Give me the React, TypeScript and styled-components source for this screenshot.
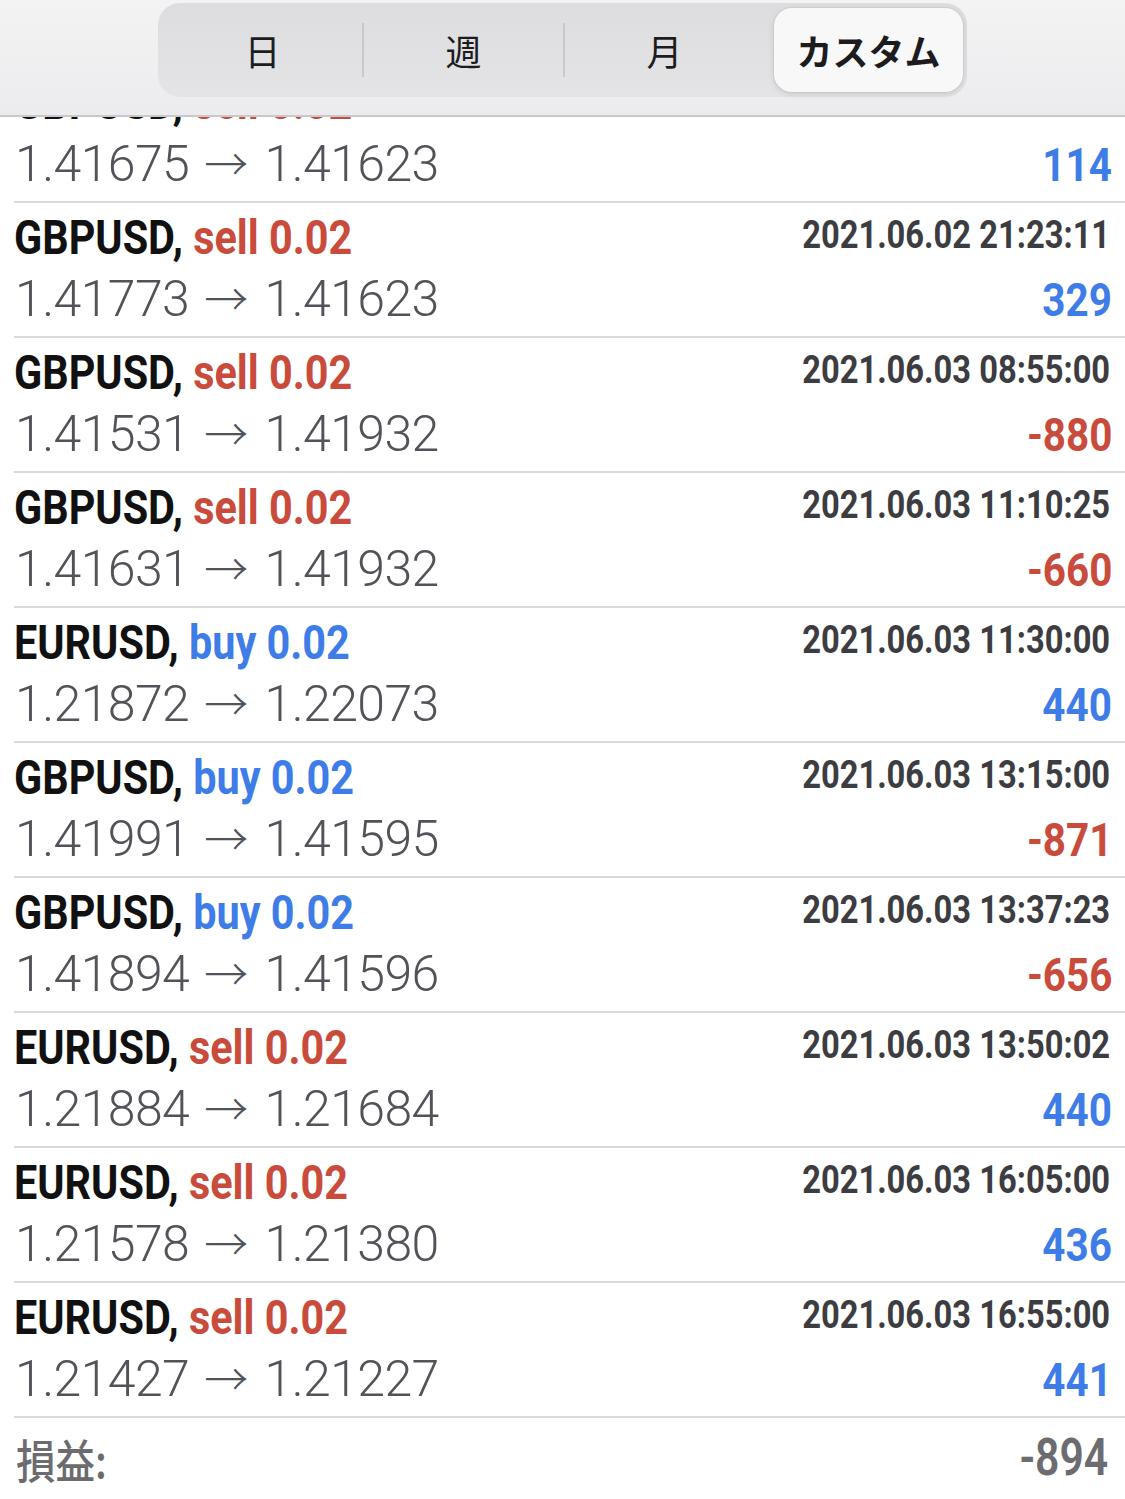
import React from "react";
import styled, { createGlobalStyle } from "styled-components";

type Trade = {
  symbol: string;
  side: "buy" | "sell";
  volume: string;
  time?: string;
  open: string;
  close: string;
  profit: number;
};

const trades: Trade[] = [
  { symbol: "GBPUSD", side: "sell", volume: "0.02", open: "1.41675", close: "1.41623", profit: 114 },
  { symbol: "GBPUSD", side: "sell", volume: "0.02", time: "2021.06.02 21:23:11", open: "1.41773", close: "1.41623", profit: 329 },
  { symbol: "GBPUSD", side: "sell", volume: "0.02", time: "2021.06.03 08:55:00", open: "1.41531", close: "1.41932", profit: -880 },
  { symbol: "GBPUSD", side: "sell", volume: "0.02", time: "2021.06.03 11:10:25", open: "1.41631", close: "1.41932", profit: -660 },
  { symbol: "EURUSD", side: "buy", volume: "0.02", time: "2021.06.03 11:30:00", open: "1.21872", close: "1.22073", profit: 440 },
  { symbol: "GBPUSD", side: "buy", volume: "0.02", time: "2021.06.03 13:15:00", open: "1.41991", close: "1.41595", profit: -871 },
  { symbol: "GBPUSD", side: "buy", volume: "0.02", time: "2021.06.03 13:37:23", open: "1.41894", close: "1.41596", profit: -656 },
  { symbol: "EURUSD", side: "sell", volume: "0.02", time: "2021.06.03 13:50:02", open: "1.21884", close: "1.21684", profit: 440 },
  { symbol: "EURUSD", side: "sell", volume: "0.02", time: "2021.06.03 16:05:00", open: "1.21578", close: "1.21380", profit: 436 },
  { symbol: "EURUSD", side: "sell", volume: "0.02", time: "2021.06.03 16:55:00", open: "1.21427", close: "1.21227", profit: 441 },
];

const tabs = ["日", "週", "月", "カスタム"];

const RED = "#c84b3c";
const BLUE = "#3e7ce8";

const GlobalStyle = createGlobalStyle`
  html, body {
    margin: 0;
    padding: 0;
    background: #ffffff;
  }
  body {
    font-family: Roboto, "Noto Sans CJK JP", sans-serif;
    -webkit-font-smoothing: antialiased;
  }
`;

const Page = styled.div`
  position: relative;
  width: 1125px;
  height: 1499px;
  overflow: hidden;
  background: #ffffff;
`;

const Header = styled.header`
  position: absolute;
  top: 0;
  left: 0;
  right: 0;
  height: 117px;
  display: flex;
  justify-content: center;
  padding-top: 3px;
  box-sizing: border-box;
  background: linear-gradient(#f3f3f4, #ececee);
  border-bottom: 2px solid #c9c9cc;
  z-index: 2;
`;

const Segmented = styled.div`
  display: flex;
  align-items: center;
  width: 809px;
  height: 94px;
  padding: 0 4px;
  box-sizing: border-box;
  border-radius: 22px;
  background: linear-gradient(#dddde0, #e4e4e7);
`;

const Segment = styled.div<{ $active?: boolean; $divider?: boolean }>`
  position: relative;
  flex: ${({ $active }) => ($active ? "0 0 189px" : "1 1 0")};
  margin-left: ${({ $active }) => ($active ? "9px" : "0")};
  height: 84px;
  display: flex;
  align-items: center;
  justify-content: center;
  border-radius: 18px;
  font-family: "Noto Sans CJK JP", sans-serif;
  font-size: 36px;
  font-weight: ${({ $active }) => ($active ? 700 : 400)};
  color: #1c1c1e;
  background: ${({ $active }) => ($active ? "#f8f8f8" : "transparent")};
  box-shadow: ${({ $active }) =>
    $active ? "0 2px 6px rgba(0,0,0,0.12), 0 0 0 1px rgba(0,0,0,0.04)" : "none"};

  &::after {
    content: "";
    display: ${({ $divider }) => ($divider ? "block" : "none")};
    position: absolute;
    right: -1px;
    top: 15px;
    bottom: 15px;
    width: 2px;
    background: #c9c9cd;
  }
`;

const List = styled.div`
  padding-top: 68px;
`;

const Row = styled.div`
  margin-left: 14px;
  padding: 5px 15px 6px 0;
  border-bottom: 2px solid #d9d9dc;
`;

const Line = styled.div<{ $tall?: number }>`
  display: flex;
  justify-content: space-between;
  align-items: baseline;
  height: ${({ $tall }) => $tall ?? 60}px;
`;

const TopLine = styled(Line)`
  align-items: flex-start;
`;

const Condensed = styled.span<{ $origin?: "left" | "right"; $scale?: number }>`
  display: inline-block;
  white-space: nowrap;
  transform: scaleX(${({ $scale }) => $scale ?? 0.86});
  transform-origin: ${({ $origin }) => $origin ?? "left"} center;
`;

const Title = styled.div`
  font-size: 49px;
  line-height: 60px;
  font-weight: 700;
  color: #111111;
`;

const Side = styled.span<{ $side: "buy" | "sell" }>`
  color: ${({ $side }) => ($side === "buy" ? BLUE : RED)};
`;

const Time = styled.div`
  font-size: 38px;
  line-height: 54px;
  font-weight: 700;
  color: #3c3c41;
`;

const Prices = styled.div`
  font-size: 50px;
  line-height: 62px;
  font-weight: 300;
  color: #525358;
  letter-spacing: -0.6px;
  margin-left: 1px;
`;

const Arrow = styled.span`
  display: inline-block;
  margin: 0 17px 0 15px;
  font-size: 44px;
  font-weight: 300;
`;

const Profit = styled.div<{ $negative: boolean }>`
  font-size: 47px;
  line-height: 62px;
  font-weight: 700;
  color: ${({ $negative }) => ($negative ? RED : BLUE)};
  margin-right: -2px;
`;

const Footer = styled.div`
  display: flex;
  justify-content: space-between;
  align-items: center;
  margin-left: 14px;
  padding: 4px 17px 0 2px;
  height: 72px;
`;

const FooterLabel = styled.div`
  font-family: "Noto Sans CJK JP", sans-serif;
  font-size: 46px;
  line-height: 62px;
  font-weight: 500;
  color: #6c6c70;
`;

const FooterValue = styled.div`
  font-size: 52px;
  line-height: 62px;
  font-weight: 600;
  color: #6c6c70;
`;

const TradeRow = ({ t }: { t: Trade }) => (
  <Row>
    <TopLine>
      <Title>
        <Condensed $scale={0.845}>
          {t.symbol},{" "}
          <Side $side={t.side}>
            {t.side} {t.volume}
          </Side>
        </Condensed>
      </Title>
      <Time>{t.time && <Condensed $origin="right">{t.time}</Condensed>}</Time>
    </TopLine>
    <Line $tall={62}>
      <Prices>
        {t.open}
        <Arrow>→</Arrow>
        {t.close}
      </Prices>
      <Profit $negative={t.profit < 0}>
        <Condensed $origin="right">{t.profit}</Condensed>
      </Profit>
    </Line>
  </Row>
);

export default function App() {
  return (
    <>
      <GlobalStyle />
      <Page>
        <Header>
          <Segmented>
            {tabs.map((tab, i) => (
              <Segment key={tab} $active={i === 3} $divider={i < 2}>
                {tab}
              </Segment>
            ))}
          </Segmented>
        </Header>
        <List>
          {trades.map((t, i) => (
            <TradeRow key={i} t={t} />
          ))}
          <Footer>
            <FooterLabel>
              <Condensed>損益:</Condensed>
            </FooterLabel>
            <FooterValue>
              <Condensed $origin="right" $scale={0.82}>-894</Condensed>
            </FooterValue>
          </Footer>
        </List>
      </Page>
    </>
  );
}
